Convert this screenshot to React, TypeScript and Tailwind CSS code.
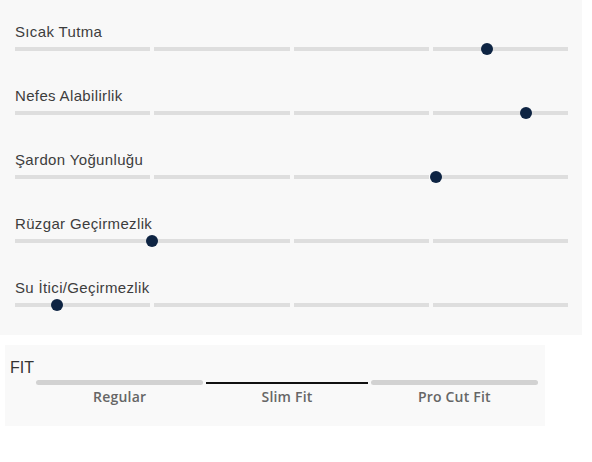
const SLIDERS = [
  { label: "Sıcak Tutma", x: 487 },
  { label: "Nefes Alabilirlik", x: 526 },
  { label: "Şardon Yoğunluğu", x: 436 },
  { label: "Rüzgar Geçirmezlik", x: 152 },
  { label: "Su İtici/Geçirmezlik", x: 57 },
];

const FITS = ["Regular", "Slim Fit", "Pro Cut Fit"];

export default function App() {
  return (
    <div className="w-[592px] h-[462px] bg-white font-['Liberation_Sans',Arial,sans-serif]">
      {/* Properties */}
      <div className="w-[582px] bg-[#f8f8f8] pl-[15px] pr-[14px] pb-[15px]">
        {SLIDERS.map((s) => (
          <SliderRow key={s.label} label={s.label} x={s.x} />
        ))}
      </div>

      {/* Fit selector */}
      <div className="ml-[5px] mt-[10px] w-[540px] h-[81px] bg-[#f9f9f9] pl-[5px] pt-[15px]">
        <div className="text-[16px] leading-[16px] text-[#333]">FIT</div>
        <div className="ml-[26px] mr-[7px] mt-[4px] flex items-center h-[5px]">
          {FITS.map((f, i) => (
            <div key={f} className="flex-1 flex items-center h-[5px]">
              {i === 1 ? (
                <div className="w-full mx-[3px] h-[2px] bg-[#111]" />
              ) : (
                <div className="w-full h-[5px] rounded-full bg-[#d2d2d2]" />
              )}
            </div>
          ))}
        </div>
        <div className="ml-[26px] mr-[7px] mt-[3px] flex">
          {FITS.map((f) => (
            <div
              key={f}
              className="flex-1 text-center text-[14px] leading-[17px] font-semibold tracking-[0.2px] text-[#666] font-['Open_Sans',sans-serif]"
            >
              {f}
            </div>
          ))}
        </div>
      </div>
    </div>
  );
}

function SliderRow({ label, x }: { label: string; x: number }) {
  return (
    <div className="h-[64px] pt-[23px]">
      <div className="text-[15px] leading-[18px] tracking-[0.35px] text-[#3d3d3d]">{label}</div>
      <div className="relative mt-[2px] h-[12px] flex items-center gap-[4px]">
        {[0, 1, 2, 3].map((i) => (
          <div key={i} className="flex-1 h-[4px] bg-[#dedede]" />
        ))}
        <div
          className="absolute top-0 w-[12px] h-[12px] rounded-full bg-[#0e2443]"
          style={{ left: x - 15 - 6 }}
        />
      </div>
    </div>
  );
}
